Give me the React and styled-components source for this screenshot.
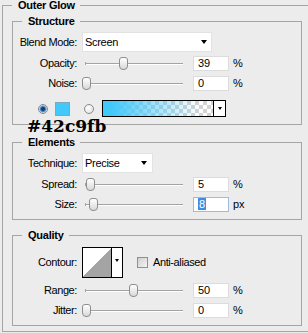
import React from 'react';
import styled, { createGlobalStyle } from 'styled-components';

const Global = createGlobalStyle`
  html, body { margin: 0; padding: 0; background: #ececec; }
  body {
    width: 308px; height: 333px; overflow: hidden;
    font-family: "Liberation Sans", Arial, sans-serif;
    font-size: 11px; color: #000;
  }
`;

const Page = styled.div`
  position: relative;
  width: 308px;
  height: 333px;
  overflow: hidden;
  background: #ececec;
`;

const Outer = styled.fieldset`
  margin: 0 0 0 2px;
  padding: 5px 0 5px 9px;
  width: 330px;
  min-width: 0;
  box-sizing: border-box;
  border: 1px solid #a5a5a5;
`;

const Legend = styled.legend`
  font-weight: bold;
  font-size: 11px;
  line-height: 11px;
  height: 11px;
  padding: 0 5px 0 6px;
  margin-left: ${(p) => p.$inset || 0}px;
  letter-spacing: -0.25px;
`;

const Group = styled.fieldset`
  margin: ${(p) => p.$top || 0}px 0 0 0;
  padding: ${(p) => p.$pt}px 0 7px 0;
  width: 290px;
  min-width: 0;
  box-sizing: border-box;
  border: 1px solid #a5a5a5;
`;

const Row = styled.div`
  display: grid;
  grid-template-columns: 64px auto;
  column-gap: 5px;
  align-items: center;
  height: ${(p) => p.$h}px;
  margin-top: ${(p) => p.$mt || 0}px;
`;

const Label = styled.span`
  text-align: right;
  white-space: nowrap;
  letter-spacing: -0.4px;
  line-height: 13px;
`;

const Controls = styled.div`
  display: flex;
  align-items: center;
`;

const Select = styled.div`
  width: ${(p) => p.$w}px;
  height: 20px;
  box-sizing: border-box;
  background: #fff;
  border: 1px solid #e2e2e2;
  display: flex;
  align-items: center;
  justify-content: space-between;
  padding: 0 ${(p) => p.$pr}px 0 2px;
  letter-spacing: -0.3px;
`;

const Caret = styled.span`
  width: 0;
  height: 0;
  border-left: ${(p) => p.$s}px solid transparent;
  border-right: ${(p) => p.$s}px solid transparent;
  border-top: ${(p) => p.$s + 1}px solid #000;
`;

const Slider = styled.div`
  position: relative;
  width: 105px;
  height: 15px;
  box-sizing: border-box;
  padding: 0 4px 0 3px;
  display: flex;
  align-items: center;
`;

const Track = styled.div`
  position: relative;
  flex: 1;
  height: 1px;
  background: #a3a3a3;
  box-shadow: 0 1px 0 #fff;
  &::before {
    content: '';
    position: absolute;
    left: 0;
    top: -1px;
    width: 1px;
    height: 3px;
    background: #a3a3a3;
  }
`;

const Thumb = styled.div`
  position: absolute;
  top: 1px;
  width: 9px;
  height: 13px;
  box-sizing: border-box;
  border: 1px solid #8e8e8e;
  border-radius: 3px 3px 4px 4px;
  background: linear-gradient(#ffffff, #d8d8d8);
`;

const NumBox = styled.div`
  margin-left: 6px;
  width: 36px;
  height: 15px;
  box-sizing: border-box;
  background: #fff;
  border: 1px solid ${(p) => (p.$focus ? '#9fbadb' : '#dcdcdc')};
  padding-left: 4px;
  line-height: 13px;
`;

const Selected = styled.span`
  background: #3b8ee3;
  color: #fff;
  padding: 0 1px;
`;

const Unit = styled.span`
  margin-left: 4px;
  line-height: 13px;
`;

const ColorRow = styled.div`
  display: flex;
  align-items: center;
  height: 17px;
  margin-top: 9px;
  padding-left: 25px;
`;

const Radio = styled.span`
  width: 10px;
  height: 10px;
  box-sizing: border-box;
  border-radius: 50%;
  border: 1px solid #8a8a8a;
  margin-right: ${(p) => p.$mr}px;
  background: ${(p) =>
    p.$on
      ? 'radial-gradient(circle, #163f6e 0 1.5px, #3f86c9 2.5px, #9cc2e6 3.5px, #f2f2f2 4px)'
      : 'radial-gradient(circle at 40% 35%, #ffffff, #dcdcdc)'};
`;

const Swatch = styled.span`
  width: 15px;
  height: 14px;
  box-sizing: border-box;
  background: #42c9fb;
  border: 1px solid #7fa8bb;
  margin-right: 14px;
`;

const Picker = styled.div`
  display: flex;
  width: ${(p) => p.$w}px;
  height: ${(p) => p.$h}px;
  box-sizing: border-box;
  border: 1px solid #000;
`;

const GradFill = styled.div`
  flex: 1;
  background: linear-gradient(to right, #42c9fb 8%, rgba(66, 201, 251, 0) 88%),
    repeating-conic-gradient(#d3d3d3 0% 25%, #ffffff 0% 50%) 0 0 / 8px 8px;
`;

const ContourFill = styled.div`
  flex: 1;
  background: linear-gradient(to top left, #a4a4a4 50%, #ffffff 50%);
`;

const ArrowPart = styled.div`
  width: ${(p) => p.$w}px;
  border-left: 1px solid #000;
  background: #fff;
  display: flex;
  justify-content: center;
  align-items: ${(p) => (p.$top ? 'flex-start' : 'center')};
  padding-top: ${(p) => (p.$top ? 11 : 0)}px;
  box-sizing: border-box;
`;

const Check = styled.span`
  width: 11px;
  height: 11px;
  box-sizing: border-box;
  margin-left: 14px;
  border: 1px solid #8f8f8f;
  background: linear-gradient(135deg, #cfcfcf, #f5f5f5);
`;

const CheckLabel = styled.span`
  margin-left: 5px;
  letter-spacing: -0.4px;
  line-height: 13px;
`;

const Annotation = styled.div`
  position: absolute;
  left: 27px;
  top: 119px;
  font-family: "DejaVu Serif", serif;
  font-weight: bold;
  font-size: 17px;
  line-height: 14px;
  color: #000;
`;

const SliderRow = ({ label, value, frac, unit, mt, focus }) => (
  <Row $h={15} $mt={mt}>
    <Label>{label}</Label>
    <Controls>
      <Slider>
        <Track />
        <Thumb style={{ left: Math.round(frac * 95 - 0.5) }} />
      </Slider>
      <NumBox $focus={focus}>{focus ? <Selected>{value}</Selected> : value}</NumBox>
      <Unit>{unit}</Unit>
    </Controls>
  </Row>
);

export default function App() {
  return (
    <Page>
      <Global />
      <Outer>
        <Legend>Outer Glow</Legend>
        <Group $pt={5}>
          <Legend $inset={9}>Structure</Legend>
          <Row $h={20}>
            <Label>Blend Mode:</Label>
            <Select $w={130} $pr={4}>
              <span>Screen</span>
              <Caret $s={3} />
            </Select>
          </Row>
          <SliderRow label="Opacity:" value="39" frac={0.39} unit="%" mt={4} />
          <SliderRow label="Noise:" value="0" frac={0} unit="%" mt={5} />
          <ColorRow>
            <Radio $on $mr={7} />
            <Swatch />
            <Radio $mr={8} />
            <Picker $w={124} $h={17}>
              <GradFill />
              <ArrowPart $w={12}>
                <Caret $s={2.5} />
              </ArrowPart>
            </Picker>
          </ColorRow>
        </Group>
        <Group $top={12} $pt={5}>
          <Legend $inset={9}>Elements</Legend>
          <Row $h={20}>
            <Label>Technique:</Label>
            <Select $w={71} $pr={5}>
              <span>Precise</span>
              <Caret $s={3} />
            </Select>
          </Row>
          <SliderRow label="Spread:" value="5" frac={0.05} unit="%" mt={4} />
          <SliderRow label="Size:" value="8" frac={0.074} unit="px" mt={5} focus />
        </Group>
        <Group $top={10} $pt={6}>
          <Legend $inset={9}>Quality</Legend>
          <Row $h={31}>
            <Label>Contour:</Label>
            <Controls>
              <Picker $w={41} $h={31}>
                <ContourFill />
                <ArrowPart $w={11} $top>
                  <Caret $s={2.5} />
                </ArrowPart>
              </Picker>
              <Check />
              <CheckLabel>Anti-aliased</CheckLabel>
            </Controls>
          </Row>
          <SliderRow label="Range:" value="50" frac={0.5} unit="%" mt={5} />
          <SliderRow label="Jitter:" value="0" frac={0} unit="%" mt={5} />
        </Group>
      </Outer>
      <Annotation>#42c9fb</Annotation>
    </Page>
  );
}
